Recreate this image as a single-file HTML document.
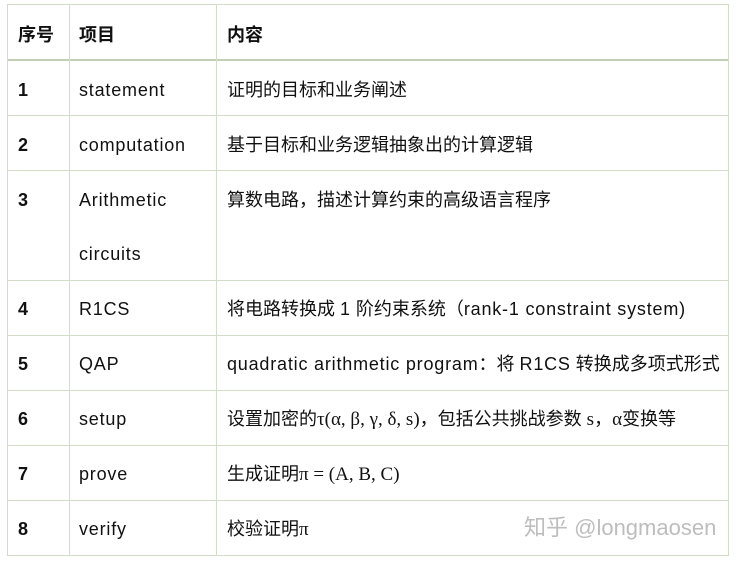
<!DOCTYPE html>
<html><head><meta charset="utf-8"><style>
body{margin:0;width:738px;height:562px;background:#fff;position:relative;overflow:hidden;font-family:"Liberation Sans","Noto Sans CJK SC",sans-serif;color:#111;}
.h{position:absolute;height:1px;background:#d3dbc9;left:7px;width:722px}
.v{position:absolute;width:1px;background:#d3dbc9;top:4px;height:552px}
.t{position:absolute;font-size:18px;line-height:22px;white-space:nowrap}
.l{letter-spacing:0.8px}
b.t{font-weight:bold}
.s{font-family:"Liberation Serif","Noto Serif CJK SC",serif;font-size:19px}
</style></head><body>
<div class="h" style="top:4px"></div>
<div class="h" style="top:59px;height:2px;background:#c3cfb5"></div>
<div class="h" style="top:115px"></div>
<div class="h" style="top:170px"></div>
<div class="h" style="top:280px"></div>
<div class="h" style="top:335px"></div>
<div class="h" style="top:390px"></div>
<div class="h" style="top:445px"></div>
<div class="h" style="top:500px"></div>
<div class="h" style="top:555px"></div>
<div class="v" style="left:7px"></div>
<div class="v" style="left:69px"></div>
<div class="v" style="left:216px"></div>
<div class="v" style="left:728px"></div>

<b class="t" style="left:18px;top:24px">序号</b>
<b class="t" style="left:79px;top:24px">项目</b>
<b class="t" style="left:227px;top:24px">内容</b>

<b class="t" style="left:18px;top:79px">1</b>
<div class="t l" style="left:79px;top:79px">statement</div>
<div class="t" style="left:227px;top:79px">证明的目标和业务阐述</div>

<b class="t" style="left:18px;top:134px">2</b>
<div class="t l" style="left:79px;top:134px">computation</div>
<div class="t" style="left:227px;top:134px">基于目标和业务逻辑抽象出的计算逻辑</div>

<b class="t" style="left:18px;top:189px">3</b>
<div class="t l" style="left:79px;top:189px">Arithmetic</div>
<div class="t l" style="left:79px;top:243px">circuits</div>
<div class="t" style="left:227px;top:189px">算数电路，描述计算约束的高级语言程序</div>

<b class="t" style="left:18px;top:298px">4</b>
<div class="t l" style="left:79px;top:298px">R1CS</div>
<div class="t" style="left:227px;top:298px">将电路转换成 <span class="l">1</span> 阶约束系统（<span class="l">rank-1 constraint system)</span></div>

<b class="t" style="left:18px;top:353px">5</b>
<div class="t l" style="left:79px;top:353px">QAP</div>
<div class="t" style="left:227px;top:353px"><span class="l">quadratic arithmetic program</span>：将 <span class="l">R1CS</span> 转换成多项式形式</div>

<b class="t" style="left:18px;top:408px">6</b>
<div class="t l" style="left:79px;top:408px">setup</div>
<div class="t" style="left:227px;top:408px">设置加密的<span class="s">τ(α, β, γ, δ, s)</span>，包括公共挑战参数 <span class="s">s</span>，<span class="s">α</span>变换等</div>

<b class="t" style="left:18px;top:463px">7</b>
<div class="t l" style="left:79px;top:463px">prove</div>
<div class="t" style="left:227px;top:463px">生成证明<span class="s">π = (A, B, C)</span></div>

<b class="t" style="left:18px;top:518px">8</b>
<div class="t l" style="left:79px;top:518px">verify</div>
<div class="t" style="left:227px;top:518px">校验证明<span class="s">π</span></div>

<div class="t" style="left:524px;top:515px;font-size:22px;line-height:26px;color:#bdbdbd">知乎 @longmaosen</div>
</body></html>
